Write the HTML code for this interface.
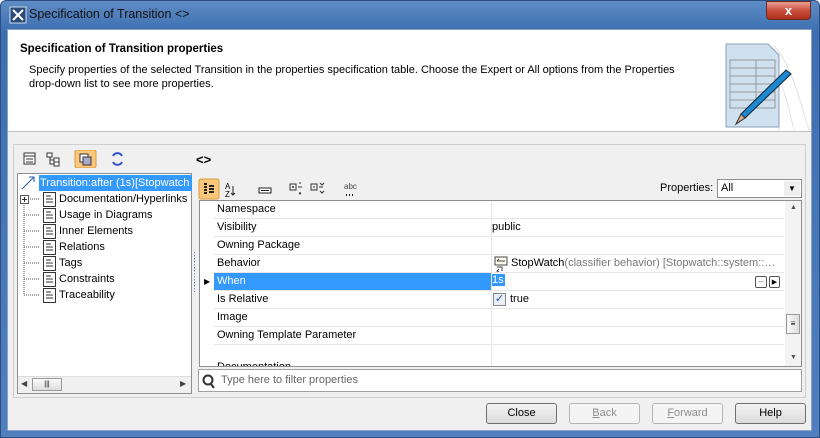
<!DOCTYPE html>
<html><head><style>
*{box-sizing:border-box;margin:0;padding:0}
body{width:820px;height:438px;overflow:hidden;font-family:"Liberation Sans",sans-serif;font-size:11px;color:#000;background:#fff}
.win{position:absolute;left:0;top:0;width:820px;height:438px;background:linear-gradient(180deg,#5f8cc4 0,#3d6fb0 30px,#4f7fbe 100%);border:1px solid #2b4f80;border-radius:6px 6px 0 0}
.title{position:absolute;left:28px;top:6px;font-size:12.5px;color:#111}
.xbtn{position:absolute;left:765px;top:0px;width:45px;height:19px;background:linear-gradient(#e9a394,#c8503c 50%,#b0301c);border:1px solid #6b2a22;border-radius:0 0 4px 4px;color:#fff;font-weight:bold;text-align:center;font-size:13px;line-height:17px}
.client{position:absolute;left:6px;top:28px;width:805px;height:402px;background:#f0f0f0;border:1px solid #8aa2c3}
.hdr{position:absolute;left:0;top:0;width:803px;height:102px;background:#fff;border-bottom:1px solid #bfbfbf;overflow:hidden}
.abs{position:absolute;white-space:nowrap}
.panel{position:absolute;left:5px;top:114px;width:793px;height:254px;border:1px solid #cfcfcf}
.tree{position:absolute;left:9px;top:143px;width:175px;height:221px;background:#fff;border:1px solid #8e8f8f}
.trow{position:absolute;left:22px;height:16px;line-height:16px;font-size:11px}
.doc{position:absolute;left:3px;top:1px}
.tbl{position:absolute;left:191px;top:170px;width:603px;height:167px;background:#fff;border:1px solid #8e8f8f;overflow:hidden}
.r{position:absolute;left:14px;width:570px;height:18px;border-bottom:1px solid #e6e6e6}
.r span{position:absolute;left:3px;top:2px}
.btn{position:absolute;top:373px;width:71px;height:21px;border:1px solid #707070;border-radius:3px;background:linear-gradient(#f2f2f2,#dcdcdc);text-align:center;line-height:19px;font-size:11px}
.dis{color:#8d8d8d;border-color:#b5b5b5;background:#f4f4f4}
</style></head><body>
<div class="win">
<svg class="abs" style="left:8px;top:5px" width="18" height="18"><rect x="1" y="1" width="16" height="16" fill="#2c4a78" stroke="#cde" /><path d="M4 4L14 14M14 4L8 10M4 14L8 10" stroke="#fff" stroke-width="2"/></svg>
<div class="title">Specification of Transition &lt;&gt;</div>
<div class="xbtn">x</div>
<div class="client">
 <div class="hdr">
  <div class="abs" style="left:12px;top:13px;font-weight:bold;font-size:11.5px">Specification of Transition properties</div>
  <div class="abs" style="left:21px;top:33px;line-height:14px">Specify properties of the selected Transition in the properties specification table. Choose the Expert or All options from the Properties<br>drop-down list to see more properties.</div>
  <svg class="abs" style="left:706px;top:10px" width="96" height="92">
   <path d="M60 5C80 30 85 60 95 90M50 10C70 40 75 70 80 90M40 30C60 50 65 75 65 92" stroke="#e2e2e2" fill="none"/>
   <path d="M12 4h42l11 11v72H12z" fill="#cfe0ef" stroke="#8aa0b8"/>
   <g stroke="#999" fill="none"><rect x="16" y="20" width="45" height="48"/><path d="M16 28h45M16 36h45M16 44h45M16 52h45M16 60h45M42 20v48"/></g>
   <path d="M72 30L77 34L31 78L27 74z" fill="#1e88d0" stroke="#123"/>
   <path d="M27 74L31 78L22 84z" fill="#d4b08c" stroke="#333"/>
  </svg>
 </div>
 <div class="panel"></div>
 <svg class="abs" style="left:15px;top:120px" width="110" height="18">
  <rect x="1" y="3" width="11" height="11" fill="#fff" stroke="#333"/><path d="M1 6h11M3 9h7M3 12h7" stroke="#333"/>
  <path d="M24 3h5v4h-5zM27 7v7h4M27 10h4M31 8h5v4h-5zM31 12h5v4h-5z" stroke="#333" fill="#fff"/>
  <rect x="52" y="0" width="21" height="18" rx="2" fill="#fbc77a" stroke="#d99a3c"/><rect x="57" y="4" width="8" height="8" fill="#fff" stroke="#333"/><rect x="60" y="7" width="8" height="8" fill="#aac" stroke="#333"/>
  <path d="M90 6a5 5 0 0 1 9 0M99 12a5 5 0 0 1-9 0" stroke="#3050d0" stroke-width="2" fill="none"/>
 </svg>
 <div class="abs" style="left:188px;top:122px;font-weight:bold;font-size:13px">&lt;&gt;</div>
 <div class="tree">
  <svg class="abs" style="left:2px;top:1px" width="16" height="16"><path d="M2 14L14 2M9 2h5v5" stroke="#2a5bb0" fill="none"/></svg>
  <div class="abs" style="left:21px;top:1px;height:16px;width:153px;background:#3399ff;color:#fff;line-height:16px;padding-left:1px;overflow:hidden">Transition:after (1s)[Stopwatch</div>
  <svg class="abs" style="left:0;top:17px" width="24" height="110"><path d="M6 12v92M6 24h15M6 40h15M6 56h15M6 72h15M6 88h15M6 104h15M10 8h11" stroke="#555" stroke-dasharray="1 1"/><rect x="2.5" y="4.5" width="8" height="8" fill="#fff" stroke="#555"/><path d="M4 8.5h5M6.5 6v5" stroke="#333"/></svg>
  <div class="trow" style="top:17px"><svg class="doc" width="13" height="15"><rect x="0.5" y="0.5" width="12" height="14" fill="#fff" stroke="#333"/><path d="M3 4h5M3 7h7M3 10h7" stroke="#333"/></svg><span style="padding-left:19px">Documentation/Hyperlinks</span></div>
  <div class="trow" style="top:33px"><svg class="doc" width="13" height="15"><rect x="0.5" y="0.5" width="12" height="14" fill="#fff" stroke="#333"/><path d="M3 4h5M3 7h7M3 10h7" stroke="#333"/></svg><span style="padding-left:19px">Usage in Diagrams</span></div>
  <div class="trow" style="top:49px"><svg class="doc" width="13" height="15"><rect x="0.5" y="0.5" width="12" height="14" fill="#fff" stroke="#333"/><path d="M3 4h5M3 7h7M3 10h7" stroke="#333"/></svg><span style="padding-left:19px">Inner Elements</span></div>
  <div class="trow" style="top:65px"><svg class="doc" width="13" height="15"><rect x="0.5" y="0.5" width="12" height="14" fill="#fff" stroke="#333"/><path d="M3 4h5M3 7h7M3 10h7" stroke="#333"/></svg><span style="padding-left:19px">Relations</span></div>
  <div class="trow" style="top:81px"><svg class="doc" width="13" height="15"><rect x="0.5" y="0.5" width="12" height="14" fill="#fff" stroke="#333"/><path d="M3 4h5M3 7h7M3 10h7" stroke="#333"/></svg><span style="padding-left:19px">Tags</span></div>
  <div class="trow" style="top:97px"><svg class="doc" width="13" height="15"><rect x="0.5" y="0.5" width="12" height="14" fill="#fff" stroke="#333"/><path d="M3 4h5M3 7h7M3 10h7" stroke="#333"/></svg><span style="padding-left:19px">Constraints</span></div>
  <div class="trow" style="top:113px"><svg class="doc" width="13" height="15"><rect x="0.5" y="0.5" width="12" height="14" fill="#fff" stroke="#333"/><path d="M3 4h5M3 7h7M3 10h7" stroke="#333"/></svg><span style="padding-left:19px">Traceability</span></div>
  <div class="abs" style="left:0;top:202px;width:173px;height:17px;background:#f0f0f0;border-top:1px solid #ddd"></div>
  <div class="abs" style="left:3px;top:205px;font-size:8px;color:#444">◀</div>
  <div class="abs" style="left:14px;top:204px;width:30px;height:13px;border:1px solid #999;background:linear-gradient(#fafafa,#ddd);font-size:7px;text-align:center;line-height:11px">|||</div>
  <div class="abs" style="left:162px;top:205px;font-size:8px;color:#444">▶</div>
 </div>
 <svg class="abs" style="left:185px;top:222px" width="3" height="40"><path d="M1.5 0v40" stroke="#6b8fd0" stroke-dasharray="1.5 1.5"/></svg>
 <svg class="abs" style="left:190px;top:148px" width="170" height="22">
  <rect x="1" y="1" width="20" height="20" rx="2" fill="#fbc77a" stroke="#d99a3c"/><path d="M6 6h3M6 9h3M6 12h3M6 15h3M11 8h5M11 11h5M11 14h5" stroke="#222" stroke-width="2"/>
  <text x="27" y="11" font-size="8" font-family="Liberation Sans">A</text><text x="27" y="19" font-size="8" font-family="Liberation Sans">Z</text><path d="M35 8v9M33 15l2 2 2-2" stroke="#222" fill="none"/>
  <rect x="61" y="10" width="12" height="5" fill="#fff" stroke="#222"/><path d="M63 12.5h8" stroke="#222"/>
  <path d="M92 6h6v6h-6zM94 9h2M95 8v2M100 9h4M102 4v2M102 14v2M101 15l1 1 1-1" stroke="#333" fill="none"/>
  <path d="M113 6h6v6h-6zM115 9h2M121 9h4M122 5l2 2 2-2M122 13l2 2 2-2" stroke="#333" fill="none"/>
  <text x="146" y="11" font-size="8" fill="#444" font-family="Liberation Sans">abc</text><path d="M148 17h1M151 17h1M154 17h1" stroke="#222" stroke-width="2"/>
 </svg>
 <div class="abs" style="left:652px;top:152px">Properties:</div>
 <div class="abs" style="left:709px;top:149px;width:85px;height:19px;border:1px solid #8e8f8f;background:#fff;padding:2px 3px">All<span class="abs" style="right:1px;top:1px;width:16px;height:15px;background:#eee;font-size:8px;text-align:center;line-height:15px">▼</span></div>
 <div class="tbl">
  <div class="r" style="top:0"><span>Namespace</span></div>
  <div class="r" style="top:18px"><span>Visibility</span><span style="left:278px">public</span></div>
  <div class="r" style="top:36px"><span>Owning Package</span></div>
  <div class="r" style="top:54px"><span>Behavior</span><svg class="abs" style="left:280px;top:1px" width="14" height="16"><rect x="1" y="1" width="12" height="8" fill="#ffe" stroke="#444"/><path d="M3 5h8M3 5l2-2M3 11h5v4M5 13l-2 2 2 1" stroke="#444" fill="none"/></svg><span style="left:297px">StopWatch<span style="position:static;color:#777">(classifier behavior) [Stopwatch::system::…</span></span></div>
  <div class="r" style="top:72px"><span style="left:0;top:0;width:277px;height:17px;background:#3399ff;color:#fff;padding:2px 3px">When</span><span style="left:277px;top:1px;background:#3399ff;color:#fff;padding:0 1px">1s</span><span style="left:541px;top:3px;width:12px;height:12px;border:1px solid #555;border-radius:2px;font-size:7px;line-height:8px;text-align:center">...</span><span style="left:555px;top:3px;width:11px;height:12px;border:1px solid #555;border-radius:2px;font-size:7px;line-height:11px;text-align:center">▶</span></div>
  <div class="r" style="top:90px"><span>Is Relative</span><span style="left:279px;top:2px;width:13px;height:13px;border:1px solid #888;background:#e8eef8;color:#2b4fa0;font-size:11px;line-height:11px;text-align:center">✓</span><span style="left:296px">true</span></div>
  <div class="r" style="top:108px"><span>Image</span></div>
  <div class="r" style="top:126px"><span>Owning Template Parameter</span></div>
  <div class="r" style="top:144px;height:30px"><span style="top:16px">Documentation</span></div>
  <div class="abs" style="left:291px;top:0;width:1px;height:167px;background:#e6e6e6"></div>
  <div class="abs" style="left:4px;top:76px;font-size:8px">▶</div>
  <div class="abs" style="left:585px;top:0;width:17px;height:167px;background:#f3f3f3"></div>
  <div class="abs" style="left:590px;top:3px;font-size:7px;color:#555">▲</div>
  <div class="abs" style="left:586px;top:113px;width:14px;height:20px;border:1px solid #999;background:linear-gradient(90deg,#fafafa,#ddd);font-size:8px;text-align:center;line-height:18px">≡</div>
  <div class="abs" style="left:590px;top:153px;font-size:7px;color:#555">▼</div>
 </div>
 <div class="abs" style="left:190px;top:339px;width:604px;height:23px;background:#fff;border:1px solid #a0a0a0">
  <svg class="abs" style="left:3px;top:4px" width="14" height="15"><circle cx="6" cy="6" r="4.5" stroke="#333" stroke-width="2" fill="none"/><path d="M9 10l3 4" stroke="#333" stroke-width="2"/></svg>
  <div class="abs" style="left:22px;top:4px;color:#666">Type here to filter properties</div>
 </div>
 <div class="btn" style="left:478px">Close</div>
 <div class="btn dis" style="left:561px"><u>B</u>ack</div>
 <div class="btn dis" style="left:644px"><u>F</u>orward</div>
 <div class="btn" style="left:727px">Help</div>
</div>
</div>
</body></html>
